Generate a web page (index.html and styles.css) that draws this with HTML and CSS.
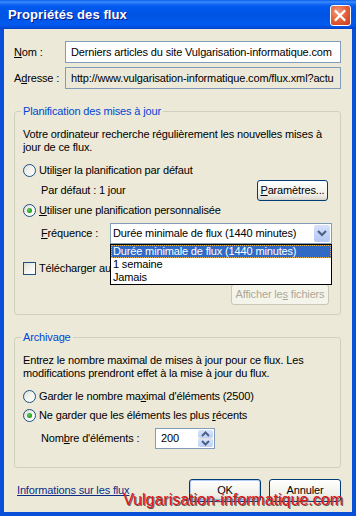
FILE: index.html
```html
<!DOCTYPE html>
<html lang="fr">
<head>
<meta charset="utf-8">
<title>Propriétés des flux</title>
<link rel="stylesheet" href="styles.css">
</head>
<body>
<div class="window">
  <div class="titlebar">
    <span class="title">Propriétés des flux</span>
    <span class="close">
      <svg width="21" height="21" viewBox="0 0 21 21">
        <path d="M6 6 L15 15 M15 6 L6 15" stroke="#fff" stroke-width="2.4" stroke-linecap="square"/>
      </svg>
    </span>
  </div>
  <div class="client">
    <div class="row row-first">
      <span class="lbl"><u>N</u>om :</span>
      <div class="field">Derniers articles du site Vulgarisation-informatique.com</div>
    </div>
    <div class="row row-second">
      <span class="lbl">A<u>d</u>resse :</span>
      <div class="field field-ro">http://www.vulgarisation-informatique.com/flux.xml?actu</div>
    </div>

    <fieldset class="group group-plan">
      <legend>Planification des mises à jour</legend>
      <p class="desc">Votre ordinateur recherche régulièrement les nouvelles mises à<br>jour de ce flux.</p>
      <div class="opt opt-first"><span class="radio"></span><span>Utili<u>s</u>er la planification par défaut</span></div>
      <div class="sub sub-default">
        <span>Par défaut : 1 jour</span>
        <span class="btn btn-params"><span><u>P</u>aramètres...</span></span>
      </div>
      <div class="opt opt-custom"><span class="radio checked"></span><span><u>U</u>tiliser une planification personnalisée</span></div>
      <div class="sub sub-freq">
        <span class="sublbl"><u>F</u>réquence :</span>
        <div class="select">
          <span class="select-text">Durée minimale de flux (1440 minutes)</span>
          <span class="select-arrow">
            <svg width="16" height="18" viewBox="0 0 16 18"><path d="M4 7 L8 11 L12 7" fill="none" stroke="#4D6185" stroke-width="2.2"/></svg>
          </span>
          <div class="popup">
            <div class="item item-sel">Durée minimale de flux (1440 minutes)</div>
            <div class="item">1 semaine</div>
            <div class="item">Jamais</div>
          </div>
        </div>
      </div>
      <div class="opt opt-check"><span class="check"></span><span>Télécharger automatiquement les pièces jointes</span></div>
      <div class="files-row">
        <span class="btn btn-disabled"><span>Afficher le<u>s</u> fichiers</span></span>
      </div>
    </fieldset>

    <fieldset class="group group-arch">
      <legend>Archivage</legend>
      <p class="desc">Entrez le nombre maximal de mises à jour pour ce flux. Les<br>modifications prendront effet à la mise à jour du flux.</p>
      <div class="opt opt-first"><span class="radio"></span><span>Garder le nombre ma<u>x</u>imal d'éléments (2500)</span></div>
      <div class="opt opt-recent"><span class="radio checked"></span><span>Ne garder que les éléments les plus <u>r</u>écents</span></div>
      <div class="sub sub-count">
        <span class="sublbl sublbl-count">Nom<u>b</u>re d'éléments :</span>
        <div class="spin">
          <span class="spin-text">200</span>
          <span class="spin-btns">
            <span class="spin-btn"><svg width="15" height="8" viewBox="0 0 15 8"><path d="M4 6 L7.5 2.5 L11 6" fill="none" stroke="#4D6185" stroke-width="2"/></svg></span>
            <span class="spin-btn"><svg width="15" height="8" viewBox="0 0 15 8"><path d="M4 2 L7.5 5.5 L11 2" fill="none" stroke="#4D6185" stroke-width="2"/></svg></span>
          </span>
        </div>
      </div>
    </fieldset>

    <div class="bottom">
      <span class="link">Informations sur les flux</span>
      <span class="buttons">
        <span class="btn btn-main btn-default"><span>OK</span></span>
        <span class="btn btn-main"><span>Annuler</span></span>
      </span>
    </div>
    <div class="watermark">Vulgarisation-informatique.com</div>
  </div>
</div>
</body>
</html>
```

FILE: styles.css
```css
html, body {
  margin: 0;
  padding: 0;
  background: #0055E5;
}
body {
  width: 356px;
  height: 516px;
  overflow: hidden;
  font-family: "Liberation Sans", Arial, sans-serif;
  font-size: 11px;
  line-height: 13px;
  letter-spacing: -0.15px;
  color: #000;
}
u { text-decoration: underline; }

.window {
  width: 356px;
  height: 516px;
  box-sizing: border-box;
  display: flex;
  flex-direction: column;
  background: #0A4FD8;
}
.titlebar {
  height: 29px;
  flex: none;
  display: flex;
  align-items: center;
  justify-content: space-between;
  padding: 0 5px 0 8px;
  box-sizing: border-box;
  background: linear-gradient(to bottom, #0A5EEA 0px, #3B8CFF 2px, #1769F5 4px, #0058EE 7px, #0054E3 16px, #005AF0 24px, #0250E0 27px, #003FC4 29px);
}
.title {
  color: #fff;
  font-weight: bold;
  font-size: 13px;
  letter-spacing: 0.1px;
  text-shadow: 1px 1px 0 #0A1B8C;
  margin-top: -1px;
}
.close {
  width: 21px;
  height: 21px;
  box-sizing: border-box;
  border: 1px solid #fff;
  border-radius: 3px;
  background: radial-gradient(circle at 35% 30%, #F29B7E 0, #E5643E 45%, #C5361A 100%);
  display: flex;
  margin-top: 1px;
}
.close svg { display: block; margin: -1px 0 0 -1px; }

.client {
  position: relative;
  flex: 1;
  margin: 0 4px 4px 4px;
  background: #ECE9D8;
  padding: 0 11px 10px 10px;
  display: flex;
  flex-direction: column;
}

.row {
  display: flex;
  align-items: center;
  height: 22px;
}
.row-first { margin-top: 12px; }
.row-second { margin-top: 4px; }
.lbl {
  width: 51px;
  flex: none;
}
.field {
  flex: 1;
  height: 22px;
  box-sizing: border-box;
  border: 1px solid #7F9DB9;
  background: #fff;
  padding: 0 5px;
  white-space: nowrap;
  overflow: hidden;
  line-height: 20px;
}
.field-ro { background: #ECE9D8; }

.group {
  margin: 0;
  border: 1px solid #D0D0BF;
  border-radius: 3px;
  padding: 0 11px 9px 8px;
  min-width: 0;
  display: flex;
  flex-direction: column;
}
.group legend {
  color: #0046D5;
  padding: 0 2px;
  margin-left: -2px;
  line-height: 13px;
}
.group-plan { margin-top: 16px; }
.group-arch { margin-top: 16px; padding-bottom: 18px; }

.desc {
  margin: 10px 0 0 0;
  white-space: nowrap;
}
.opt {
  display: flex;
  align-items: center;
  height: 13px;
  white-space: nowrap;
}
.opt-first { margin-top: 10px; }
.opt-custom { margin-top: 3px; }
.opt-recent { margin-top: 6px; }
.opt-check { margin-top: 18px; }

.radio {
  width: 13px;
  height: 13px;
  box-sizing: border-box;
  border: 1px solid #1C5180;
  border-radius: 50%;
  background: linear-gradient(135deg, #DCDCD6 0%, #F4F4F0 50%, #FFFFFF 100%);
  margin-right: 3px;
  flex: none;
  position: relative;
}
.radio.checked::after {
  content: "";
  position: absolute;
  left: 3px;
  top: 3px;
  width: 5px;
  height: 5px;
  border-radius: 50%;
  background: radial-gradient(circle at 40% 40%, #5FD05F 0, #21A121 60%, #1A8A1A 100%);
}
.check {
  width: 13px;
  height: 13px;
  box-sizing: border-box;
  border: 1px solid #1C5180;
  background: linear-gradient(135deg, #DCDCD6 0%, #F4F4F0 50%, #FFFFFF 100%);
  margin-right: 3px;
  flex: none;
}

.sub {
  display: flex;
  align-items: center;
  margin-left: 18px;
  height: 21px;
  white-space: nowrap;
}
.sub-default {
  margin-top: 3px;
  justify-content: space-between;
}
.sub-freq { margin-top: 6px; }
.sub-count { margin-top: 6px; }
.sublbl { width: 69px; flex: none; }
.sublbl-count { width: 114px; }

.btn {
  display: inline-flex;
  align-items: center;
  justify-content: center;
  height: 21px;
  box-sizing: border-box;
  border: 1px solid #003C74;
  border-radius: 3px;
  background: linear-gradient(to bottom, #FFFFFF 0%, #F8F8F4 30%, #F0F0EA 70%, #E3E0D6 90%, #D6D0C5 100%);
  white-space: nowrap;
}
.btn-params {
  width: 71px;
  margin-right: 1px;
}
.files-row {
  display: flex;
  justify-content: flex-end;
  margin-top: 9px;
}
.btn-disabled {
  width: 98px;
  border-color: #C9C7BA;
  background: #F5F4EA;
  color: #ACA899;
}

.select {
  position: relative;
  width: 222px;
  height: 21px;
  box-sizing: border-box;
  border: 1px solid #7F9DB9;
  background: #fff;
  display: flex;
  align-items: center;
  justify-content: space-between;
  flex: none;
}
.select-text { padding-left: 2px; }
.select-arrow {
  width: 16px;
  height: 17px;
  margin-right: 1px;
  border-radius: 2px;
  background: linear-gradient(to bottom, #D7E3FB 0%, #C3D4F8 50%, #B5C9F5 100%);
  border: 0;
  display: flex;
}
.select-arrow svg { display: block; margin-top: -1px; }
.popup {
  position: absolute;
  left: -1px;
  top: 20px;
  width: 222px;
  box-sizing: border-box;
  border: 1px solid #000;
  background: #fff;
  z-index: 5;
}
.item {
  height: 13px;
  line-height: 13px;
  padding-left: 2px;
}
.item-sel {
  background: #316AC5;
  color: #fff;
  outline: 1px dotted #E8B44C;
  outline-offset: -1px;
}

.spin {
  width: 60px;
  height: 21px;
  box-sizing: border-box;
  border: 1px solid #7F9DB9;
  background: #fff;
  display: flex;
  align-items: center;
  justify-content: space-between;
  flex: none;
}
.spin-text { padding-left: 5px; }
.spin-btns {
  display: flex;
  flex-direction: column;
  width: 15px;
  height: 17px;
  margin-right: 1px;
}
.spin-btn {
  flex: 1;
  display: flex;
  align-items: center;
  background: linear-gradient(to bottom, #D7E3FB 0%, #BFD1F8 100%);
  border-radius: 2px;
}
.spin-btn + .spin-btn { border-top: 1px solid #E8E2CF; }
.spin-btn svg { display: block; }

.bottom {
  margin-top: 11px;
  display: flex;
  align-items: center;
  justify-content: space-between;
  height: 23px;
}
.link {
  margin-left: 3px;
  color: #0B2B86;
  text-decoration: underline;
}
.buttons {
  display: flex;
  gap: 8px;
}
.btn-main {
  width: 72px;
  height: 23px;
}
.btn-default {
  box-shadow: inset 0 0 0 1px #B5CDF3, inset 0 -1px 0 1px #8DB2E3;
}

.watermark {
  position: absolute;
  left: 119px;
  top: 462px;
  color: #E3141C;
  font-size: 16px;
  line-height: 18px;
  letter-spacing: 0;
  text-shadow: 1px 1px 0 #5A5A5A;
  z-index: 6;
}
```
